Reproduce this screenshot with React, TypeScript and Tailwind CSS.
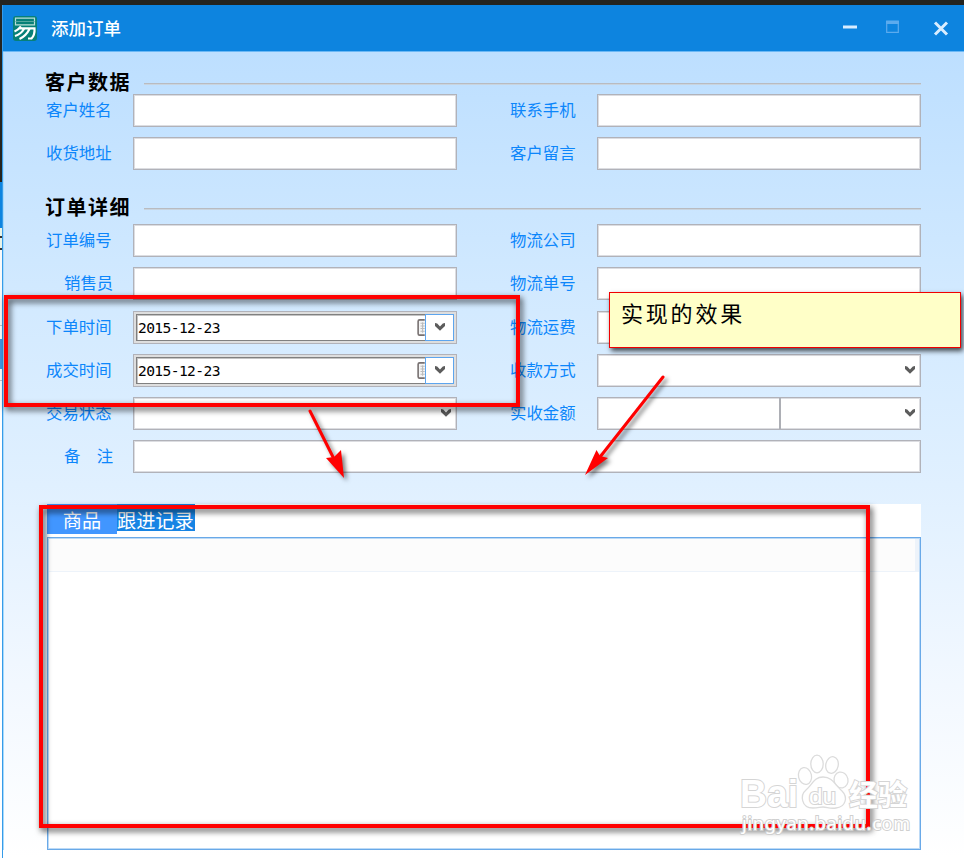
import React from "react";

function Chevron() {
  return (
    <svg width="12" height="10" viewBox="0 0 12 10" className="shrink-0">
      <path d="M1 1 L3.2 1.6 L6 4.4 L8.8 1.6 L11 1 L11 4 L6 8.8 L1 4 Z" fill="#5c5c5c" />
    </svg>
  );
}

type Kind = "text" | "select" | "date" | "split";

function Control({ kind }: { kind: Kind }) {
  if (kind === "date") {
    return (
      <div className="h-full w-full border border-[#b1b2b9] bg-[#dedede] p-[2px]">
        <div className="flex h-full items-stretch border border-r-0 border-[#808080] bg-white shadow-[inset_0_1px_0_#c4c4c4,inset_1px_0_0_#c4c4c4]">
          <span className="flex-1 whitespace-pre pl-px font-['DejaVu_Sans_Mono','Noto_Sans_CJK_SC',monospace] text-[14.6px] leading-[25px] tracking-[-0.6px] text-black">
            2015-12-23
          </span>
          <svg width="8" height="17" viewBox="0 0 7 16" className="mt-[4px] shrink-0">
            <path d="M7 .8H2.2Q.8 .8 .8 2.2V13.8Q.8 15.2 2.2 15.2H7" fill="#f4f4f4" stroke="#777070" strokeWidth="1.5" />
            <path d="M3 4H7M3 6.5H7M3 9H7M3 11.5H7M5 3V13" stroke="#bbb" strokeWidth="1" />
          </svg>
          <span className="-my-px flex w-[29px] items-center justify-center border border-[#5da5ee] bg-white">
            <Chevron />
          </span>
        </div>
      </div>
    );
  }
  if (kind === "split") {
    return (
      <div className="flex h-full w-full border border-[#b1b2b9] bg-white shadow-[inset_0_0_0_1px_#dcdde1]">
        <div className="w-[183px] border-r-2 border-[#adafb5]" />
        <div className="flex flex-1 items-center justify-end pr-[4px]"><Chevron /></div>
      </div>
    );
  }
  return (
    <div className="flex h-full w-full items-center justify-end border border-[#b1b2b9] bg-white pr-[4px] shadow-[inset_0_0_0_1px_#dcdde1]">
      {kind === "select" && <Chevron />}
    </div>
  );
}

function Field({ label, kind = "text", wide = false, indent = false }: { label: string; kind?: Kind; wide?: boolean; indent?: boolean }) {
  return (
    <div className={"flex h-[33px] " + (wide ? "w-[876px]" : "w-[412px]")}>
      <div className={"w-[88px] shrink-0 whitespace-pre text-[16.4px] leading-[30px] text-[#0c86fb] " + (indent ? "pl-[19px]" : "pl-px")}>{label}</div>
      <div className="min-w-0 flex-1"><Control kind={kind} /></div>
    </div>
  );
}

function Heading({ children }: { children: string }) {
  return (
    <div className="flex h-[26px] items-center">
      <h2 className="w-[99px] whitespace-nowrap text-[20px] font-bold leading-[26px] tracking-[1.5px] text-black">{children}</h2>
      <div className="mt-[3px] h-px w-[777px] bg-[#b9bbc0] shadow-[0_1px_0_#c8d4df]" />
    </div>
  );
}

function TitleBar() {
  return (
    <header className="flex h-[47px] items-center border-b border-[#6cb8f5] bg-[#0d84df] pl-[10px]">
      <svg width="24" height="25" viewBox="0 0 24 25">
        <rect width="24" height="25" rx="3" fill="#078078" />
        <path d="M2.5 2.2H21.5V8.8H2.5Z" fill="none" stroke="#b9dfd6" strokeWidth="1.2" />
        <path d="M2.5 5.5H21.5" stroke="#54a79e" strokeWidth="1" />
        <path d="M8 10.5Q5 14 1.5 15.5M6 12.4H21.5Q22 19 18.5 22.5H15M11 13Q8 18 2 20M16.5 13Q13 20 6.5 23" fill="none" stroke="#fff" strokeWidth="2.2" />
      </svg>
      <span className="ml-[14px] flex-1 text-[17.5px] font-medium leading-[26px] text-white">添加订单</span>
      <svg width="108" height="20" viewBox="0 0 108 20" className="mr-[14px]">
        <path d="M1 9H15" stroke="#d8edff" strokeWidth="3" />
        <path d="M44.7 3.2H56.3V14.3H44.7Z" fill="none" stroke="#5cabee" strokeWidth="1.2" />
        <path d="M44 4.5H57" stroke="#5cabee" strokeWidth="3" />
        <path d="M93 4.5L105 16.5M105 4.5L93 16.5" stroke="#d8edff" strokeWidth="3" />
      </svg>
    </header>
  );
}

function Watermark() {
  return (
    <svg width="184" height="90" viewBox="0 0 184 90" className="absolute left-[736px] top-[750px]">
      <g fill="#fff" fillOpacity="0.82" stroke="#dcdcdc" strokeWidth="1.3">
        <ellipse cx="69" cy="26" rx="6.5" ry="8.5" transform="rotate(-12 69 26)" />
        <ellipse cx="81" cy="14" rx="6.2" ry="8.8" />
        <ellipse cx="96" cy="15" rx="6.2" ry="8.4" transform="rotate(12 96 15)" />
        <ellipse cx="105" cy="30" rx="7" ry="8" transform="rotate(-12 105 30)" />
        <path d="M87 27C78 27 76 35 70 40C64 45 65 58 77 58C82 58 84 57 87 57C91 57 94 59 100 58C110 57 112 47 106 41C99 35 97 27 87 27Z" />
      </g>
      <g fill="#fff" stroke="#d5d5d5" strokeWidth="2" paintOrder="stroke" fontFamily="Liberation Sans, sans-serif" fontWeight="bold">
        <text x="4" y="57" fontSize="38" textLength="58" lengthAdjust="spacingAndGlyphs">Bai</text>
        <text x="73" y="54" fontSize="22" fontWeight="normal" textLength="27" lengthAdjust="spacingAndGlyphs">du</text>
        <text x="113" y="56" fontSize="29" fontFamily="Noto Sans CJK SC, sans-serif">经验</text>
      </g>
      <text x="6" y="80" fontSize="18" textLength="168" fontFamily="Noto Sans, sans-serif" fill="#fff" stroke="#d0d0d0" strokeWidth="2" paintOrder="stroke">
        jingyan.baidu.com
      </text>
    </svg>
  );
}

function Annotations() {
  return (
    <>
      <div className="absolute left-[4px] top-[295px] h-[112px] w-[516px] border-4 border-[#ff0000] drop-shadow-[2px_3px_3px_rgba(0,0,0,0.75)]" />
      <div className="absolute left-[39px] top-[505px] h-[323px] w-[831px] border-4 border-[#ff0000] drop-shadow-[2px_3px_3px_rgba(0,0,0,0.75)]" />
      <div className="absolute left-[609px] top-[292px] h-[56px] w-[352px] border border-[#f00000] bg-[#ffffc8] pl-[11px] pt-[3px] font-['Noto_Sans_CJK_SC',sans-serif] text-[22px] leading-[32px] tracking-[2.8px] text-black shadow-[2px_3px_5px_rgba(0,0,0,0.7)]">
        实现的效果
      </div>
      <svg width="400" height="130" viewBox="290 360 400 130" className="absolute left-[290px] top-[360px] drop-shadow-[3px_3px_2px_rgba(0,0,0,0.5)]">
        <path d="M310 411L334 459M663 377L600 457" stroke="#ff0000" strokeWidth="3" strokeLinecap="round" />
        <path d="M344 478L326 458L334 457L341 450ZM585 475L596.5 450L600 456L608 458Z" fill="#ff0000" />
      </svg>
    </>
  );
}

export default function App() {
  return (
    <div className="relative h-[858px] w-[964px] overflow-hidden bg-[#24241f] pt-[5px] font-['Noto_Sans_CJK_SC',sans-serif]">
      <div className="flex h-[853px]">
        <aside className="flex w-[2px] shrink-0 flex-col overflow-hidden bg-white">
          <div className="h-[177px] bg-[#24241f]" />
          <div className="h-[46px] bg-[#0d84df]" />
          <div className="h-[22px] border-b-2 border-[#333] bg-[#e8f3e8] pt-[8px]"><div className="h-[2px] bg-[#333]" /></div>
          <div className="h-[76px] border-b border-[#c4c4c4] bg-[#fafafa]" />
          <div className="mt-[13px] h-[30px] bg-[#4298e5]" />
          <div className="mt-[11px] h-px bg-[#c4c4c4]" />
        </aside>
        <div className="flex w-[962px] flex-col border-l border-[#369be9] bg-[linear-gradient(to_bottom,#bddfff_47px,#d1e9ff_280px,#e0f0ff_480px,#f2f8ff_680px,#ffffff_853px)]">
          <TitleBar />
          <main className="flex flex-col border-l border-[#a9dafa] pl-[41px] pt-[17px]">
            <Heading>客户数据</Heading>
            <div className="-mt-px flex flex-col gap-[10.2px]">
              <div className="flex gap-[52px]"><Field label="客户姓名" /><Field label="联系手机" /></div>
              <div className="flex gap-[52px]"><Field label="收货地址" /><Field label="客户留言" /></div>
            </div>
            <div className="mt-[24px]"><Heading>订单详细</Heading></div>
            <div className="mt-[4px] flex flex-col gap-[10.2px]">
              <div className="flex gap-[52px]"><Field label="订单编号" /><Field label="物流公司" /></div>
              <div className="flex gap-[52px]"><Field label="销售员" indent /><Field label="物流单号" /></div>
              <div className="flex gap-[52px]"><Field label="下单时间" kind="date" /><Field label="物流运费" /></div>
              <div className="flex gap-[52px]"><Field label="成交时间" kind="date" /><Field label="收款方式" kind="select" /></div>
              <div className="flex gap-[52px]"><Field label="交易状态" kind="select" /><Field label="实收金额" kind="split" /></div>
              <Field label={"备　注"} wide indent />
            </div>
            <section className="ml-[2px] mt-[31px] w-[874px]">
              <nav className="flex h-[33px] items-start bg-white text-[19.2px] text-white">
                <div className="h-[30px] w-[70px] bg-[#4196ff] text-center leading-[32px]">商品</div>
                <div className="h-[27px] w-[78px] whitespace-nowrap bg-[#1784e4] leading-[32px]">跟进记录</div>
              </nav>
              <div className="h-[313px] border border-[#69a9e8] bg-white px-px shadow-[inset_0_0_0_1px_#bddaf6]">
                <div className="mt-px h-[33px] border-b border-r-4 border-[#edf3fa] bg-[#fcfcfc]" />
              </div>
            </section>
          </main>
        </div>
      </div>
      <Annotations />
      <Watermark />
    </div>
  );
}
